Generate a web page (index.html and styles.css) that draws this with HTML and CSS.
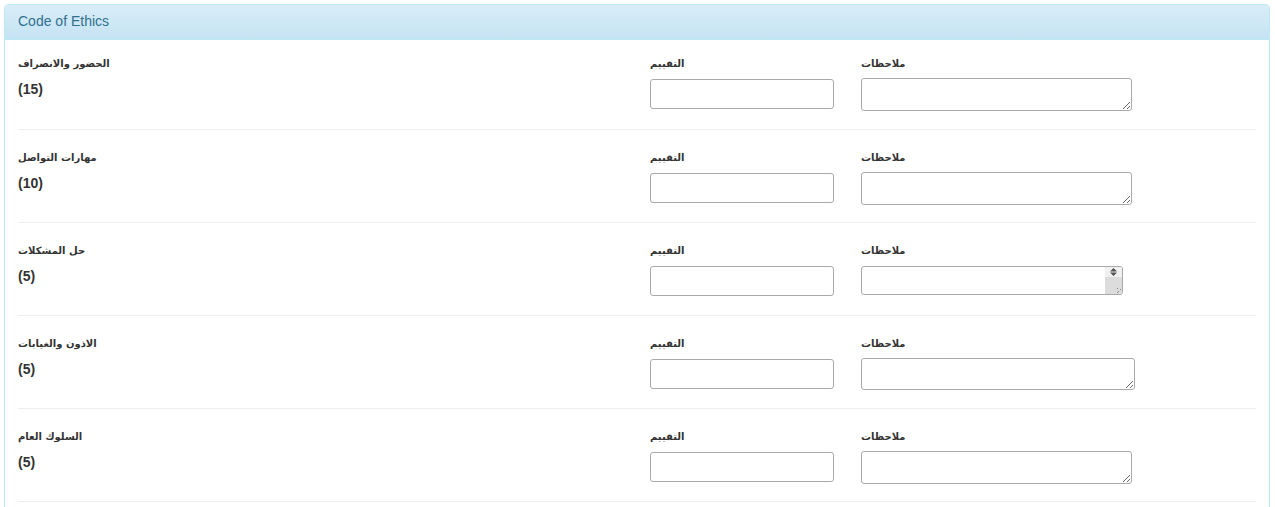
FILE: index.html
```html
<!DOCTYPE html>
<html lang="ar">
<head>
<meta charset="utf-8">
<title>Code of Ethics</title>
<link rel="stylesheet" href="styles.css">
</head>
<body>
<div class="panel">
  <div class="panel-heading"><h3 class="panel-title">Code of Ethics</h3></div>
  <div class="panel-body">
    <div class="row">
      <div class="col col-name"><label class="lbl">الحضور والانصراف</label><div class="score">(15)</div></div>
      <div class="col col-rate"><label class="lbl">التقييم</label><input class="field-input" type="text"></div>
      <div class="col col-notes"><label class="lbl">ملاحظات</label><textarea class="field-area" rows="1"></textarea></div>
    </div>
    <hr class="sep">
    <div class="row">
      <div class="col col-name"><label class="lbl">مهارات التواصل</label><div class="score">(10)</div></div>
      <div class="col col-rate"><label class="lbl">التقييم</label><input class="field-input" type="text"></div>
      <div class="col col-notes"><label class="lbl">ملاحظات</label><textarea class="field-area" rows="1"></textarea></div>
    </div>
    <hr class="sep">
    <div class="row">
      <div class="col col-name"><label class="lbl">حل المشكلات</label><div class="score">(5)</div></div>
      <div class="col col-rate"><label class="lbl">التقييم</label><input class="field-input" type="text"></div>
      <div class="col col-notes"><label class="lbl">ملاحظات</label>
        <div class="area-wrap">
          <textarea class="field-area field-scroll" rows="1"></textarea>
          <span class="fake-scroll"><span class="fake-arrows"><svg width="7" height="8" viewBox="0 0 7 8"><path d="M3.5 0L7 3.5H0Z M0 4.5H7L3.5 8Z" fill="#505050"/></svg></span><span class="fake-track"></span></span>
        </div>
      </div>
    </div>
    <hr class="sep">
    <div class="row">
      <div class="col col-name"><label class="lbl">الاذون والغيابات</label><div class="score">(5)</div></div>
      <div class="col col-rate"><label class="lbl">التقييم</label><input class="field-input" type="text"></div>
      <div class="col col-notes"><label class="lbl">ملاحظات</label><textarea class="field-area field-wide" rows="1"></textarea></div>
    </div>
    <hr class="sep">
    <div class="row">
      <div class="col col-name"><label class="lbl">السلوك العام</label><div class="score">(5)</div></div>
      <div class="col col-rate"><label class="lbl">التقييم</label><input class="field-input" type="text"></div>
      <div class="col col-notes"><label class="lbl">ملاحظات</label><textarea class="field-area" rows="1"></textarea></div>
    </div>
    <hr class="sep">
  </div>
</div>
</body>
</html>
```

FILE: styles.css
```css
* { box-sizing: border-box; }
html, body { height: 100%; }
body {
  margin: 4px 5px 0 4px;
  font-family: "Liberation Sans", Arial, "DejaVu Sans", sans-serif;
  font-size: 14px;
  line-height: 20px;
  color: #333;
  background: #fff;
  overflow: hidden;
}
.panel {
  border: 1px solid #bce8f1;
  border-radius: 4px;
  background: #fff;
  box-shadow: 0 1px 1px rgba(0,0,0,.05);
}
.panel-heading {
  background-image: linear-gradient(to bottom, #d9edf7 0%, #c4e3f3 100%);
  border-bottom: 1px solid #bce8f1;
  border-radius: 3px 3px 0 0;
  padding: 8px 13px 10px;
}
.panel-title {
  margin: 0;
  font-size: 14px;
  font-weight: normal;
  line-height: 16px;
  color: #31708f;
}
.panel-body {
  padding: 14px 13px 0;
}
.row {
  display: flex;
  align-items: flex-start;
  min-height: 57px;
}
.col {
  display: flex;
  flex-direction: column;
  align-items: flex-start;
}
.col-name { width: 632px; }
.col-rate { width: 211px; }
.col-notes { flex: 1; }
.lbl {
  display: block;
  font-family: "DejaVu Sans", sans-serif;
  font-size: 10px;
  font-weight: bold;
  line-height: 20px;
  margin-bottom: 5px;
  color: #333;
}
.score {
  font-weight: bold;
  font-size: 14px;
  line-height: 20px;
}
.field-input {
  width: 184px;
  height: 30px;
  margin: 0;
  border: 1px solid #a9a9a9;
  border-radius: 3px;
  padding: 2px 4px;
  font-family: inherit;
  font-size: 13px;
}
.field-area {
  display: block;
  width: 271px;
  height: 33px;
  margin: -1px 0 0;
  border: 1px solid #a9a9a9;
  border-radius: 3px;
  padding: 2px;
  font-family: inherit;
  font-size: 13px;
  resize: both;
}
.area-wrap {
  position: relative;
}
.field-scroll {
  width: 262px;
  height: 29px;
  margin-top: 0;
  resize: none;
}
.fake-scroll {
  position: absolute;
  top: 1px;
  right: 1px;
  bottom: 1px;
  width: 17px;
  display: flex;
  flex-direction: column;
  border-radius: 0 2px 2px 0;
  overflow: hidden;
}
.fake-arrows {
  height: 10px;
  background: #f0f0f0;
  display: flex;
  align-items: center;
  justify-content: center;
}
.fake-track {
  flex: 1;
  background: #dcdcdc linear-gradient(135deg, transparent 0 60%, #888 60% 64%, transparent 64% 76%, #888 76% 80%, transparent 80%) no-repeat right 1px bottom 1px / 10px 10px;
}
.field-wide { width: 274px; height: 32px; }
.sep {
  border: 0;
  border-top: 1px solid #eee;
  margin: 17px 0 18px;
  height: 0;
}
.sep:first-of-type { margin-top: 18px; }
```
